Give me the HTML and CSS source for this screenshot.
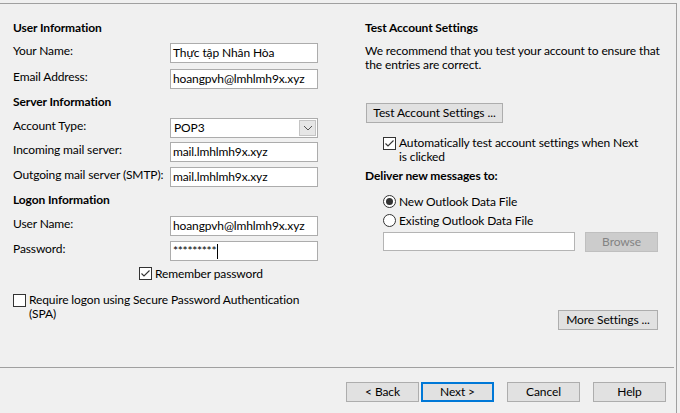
FILE: index.html
```html
<!DOCTYPE html>
<html>
<head>
<meta charset="utf-8">
<link rel="stylesheet" href="styles.css">
</head>
<body>
<div class="window">
  <div class="main">
    <section class="left">
      <h2 class="heading h-first">User Information</h2>
      <div class="field f-first"><span class="label">Your Name:</span><div class="input">Thực tập Nhân Hòa</div></div>
      <div class="field f-next6"><span class="label">Email Address:</span><div class="input">hoangpvh@lmhlmh9x.xyz</div></div>
      <h2 class="heading h-mid">Server Information</h2>
      <div class="field f-first"><span class="label">Account Type:</span><div class="input select"><span class="sel-text">POP3</span><span class="sel-btn"><svg width="10" height="6" viewBox="0 0 10 6"><path d="M1 1 L5 5 L9 1" fill="none" stroke="#555" stroke-width="1"/></svg></span></div></div>
      <div class="field f-next4"><span class="label">Incoming mail server:</span><div class="input">mail.lmhlmh9x.xyz</div></div>
      <div class="field f-next5"><span class="label">Outgoing mail server (SMTP):</span><div class="input">mail.lmhlmh9x.xyz</div></div>
      <h2 class="heading h-mid">Logon Information</h2>
      <div class="field f-first"><span class="label">User Name:</span><div class="input">hoangpvh@lmhlmh9x.xyz</div></div>
      <div class="field f-next5"><span class="label">Password:</span><div class="input"><span class="pw">*********</span><span class="caret"></span></div></div>
      <div class="check-row remember">
        <span class="box"><svg width="11" height="11" viewBox="0 0 11 11"><path d="M1.5 5.5 L4 8 L9.5 2.5" fill="none" stroke="#333" stroke-width="1.1"/></svg></span>
        <span class="check-text">Remember password</span>
      </div>
      <div class="check-row spa">
        <span class="box"></span>
        <span class="check-text">Require logon using Secure Password Authentication<br>(SPA)</span>
      </div>
    </section>
    <section class="right">
      <h2 class="heading h-first">Test Account Settings</h2>
      <p class="para">We recommend that you test your account to ensure that<br>the entries are correct.</p>
      <button class="btn btn-test">Test Account Settings ...</button>
      <div class="check-row auto">
        <span class="box"><svg width="11" height="11" viewBox="0 0 11 11"><path d="M1.5 5.5 L4 8 L9.5 2.5" fill="none" stroke="#333" stroke-width="1.1"/></svg></span>
        <span class="check-text">Automatically test account settings when Next<br>is clicked</span>
      </div>
      <h2 class="heading h-deliver">Deliver new messages to:</h2>
      <div class="radio-row r-new"><span class="radio on"></span><span>New Outlook Data File</span></div>
      <div class="radio-row r-exist"><span class="radio"></span><span>Existing Outlook Data File</span></div>
      <div class="browse-row">
        <div class="input file-input"></div>
        <button class="btn btn-disabled">Browse</button>
      </div>
      <div class="more-row"><button class="btn btn-more">More Settings ...</button></div>
    </section>
  </div>
  <div class="footer">
    <button class="btn btn-nav">&lt; Back</button>
    <button class="btn btn-nav btn-default">Next &gt;</button>
    <button class="btn btn-nav btn-gap">Cancel</button>
    <button class="btn btn-nav btn-gap">Help</button>
  </div>
</div>
</body>
</html>
```

FILE: styles.css
```css
* { box-sizing: border-box; }

html, body {
  margin: 0;
  padding: 0;
  background: #f0f0f0;
  width: 680px;
  height: 413px;
  overflow: hidden;
}

body {
  font-family: Lato, "Noto Sans", sans-serif;
  font-size: 12px;
  letter-spacing: -0.12px;
  color: #000;
  padding-top: 3px;
}

.window {
  width: 677px;
  height: 410px;
  border-top: 1px solid #a0a0a0;
  border-right: 1px solid #a0a0a0;
  display: flex;
  flex-direction: column;
}

.main {
  height: 363px;
  display: flex;
}

.left {
  width: 365px;
  padding-left: 13px;
  display: flex;
  flex-direction: column;
}

.right {
  width: 296px;
  display: flex;
  flex-direction: column;
}

.heading {
  margin: 0;
  font-size: 12px;
  font-weight: 700;
  line-height: 16px;
  height: 16px;
  letter-spacing: -0.1px;
}

.h-first { margin-top: 16px; }
.h-mid { margin-top: 5px; }

.field {
  display: flex;
  height: 20px;
}

.f-first { margin-top: 7px; }
.h-mid + .f-first { margin-top: 8px; }
.f-next4 { margin-top: 4px; }
.f-next5 { margin-top: 5px; }
.f-next6 { margin-top: 6px; }

.label {
  width: 157px;
  line-height: 16px;
  white-space: nowrap;
}

.input {
  width: 148px;
  height: 20px;
  background: #fff;
  border: 1px solid #acacac;
  padding-left: 2px;
  line-height: 18px;
  white-space: nowrap;
  display: flex;
  align-items: center;
}

.select {
  padding-left: 3px;
  justify-content: space-between;
  padding-right: 1px;
}

.sel-btn {
  width: 17px;
  height: 16px;
  background: #e6e6e6;
  border: 1px solid #c4c4c4;
  display: flex;
  align-items: center;
  justify-content: center;
}

.pw { letter-spacing: -0.3px; }

.caret {
  display: inline-block;
  width: 1px;
  height: 15px;
  background: #000;
  margin-left: 1px;
}

.check-row {
  display: flex;
  align-items: flex-start;
}

.box {
  width: 13px;
  height: 13px;
  border: 1px solid #333;
  background: #fff;
  flex: none;
  display: flex;
  align-items: center;
  justify-content: center;
  margin-right: 3px;
}

.check-text {
  line-height: 14px;
  white-space: nowrap;
}

.remember {
  margin-top: 6px;
  margin-left: 126px;
}

.spa {
  margin-top: 12px;
}

.spa .box { margin-top: 1px; }

.para {
  margin: 8px 0 0 0;
  line-height: 14px;
  white-space: nowrap;
}

.btn {
  font-family: inherit;
  font-size: 12px;
  letter-spacing: -0.1px;
  color: #000;
  background: #e1e1e1;
  border: 1px solid #adadad;
  height: 20px;
  padding: 0;
  margin: 0;
  line-height: 18px;
}

.btn-test {
  margin-top: 31px;
  margin-left: 1px;
  width: 137px;
}

.auto {
  margin-top: 13px;
  margin-left: 18px;
}

.auto .box { margin-top: 1px; }

.h-deliver { margin-top: 4px; }

.radio-row {
  display: flex;
  align-items: center;
  height: 16px;
  margin-left: 18px;
}

.r-new { margin-top: 9px; }
.r-exist { margin-top: 3px; }

.radio {
  width: 13px;
  height: 13px;
  border: 1px solid #333;
  border-radius: 50%;
  background: #fff;
  margin-right: 3px;
  position: relative;
}

.radio.on::after {
  content: "";
  position: absolute;
  left: 2px;
  top: 2px;
  width: 7px;
  height: 7px;
  border-radius: 50%;
  background: #333;
}

.browse-row {
  display: flex;
  margin-top: 4px;
  margin-left: 18px;
}

.file-input {
  width: 192px;
  height: 19px;
  border-color: #b4b4b4;
}

.btn-disabled {
  margin-left: 10px;
  width: 73px;
  background: #cccccc;
  border-color: #bfbfbf;
  color: #838383;
}

.more-row {
  display: flex;
  justify-content: flex-end;
  margin-top: 58px;
}

.btn-more {
  width: 100px;
  margin-right: 3px;
}

.footer {
  border-top: 1px solid #a0a0a0;
  margin-right: 2px;
  display: flex;
  padding-top: 14px;
  padding-left: 346px;
}

.btn-nav {
  width: 73px;
  margin-right: 2px;
}

.btn-default {
  border: 2px solid #0078d7;
  line-height: 16px;
}

.btn-gap { margin-left: 11px; }
```
